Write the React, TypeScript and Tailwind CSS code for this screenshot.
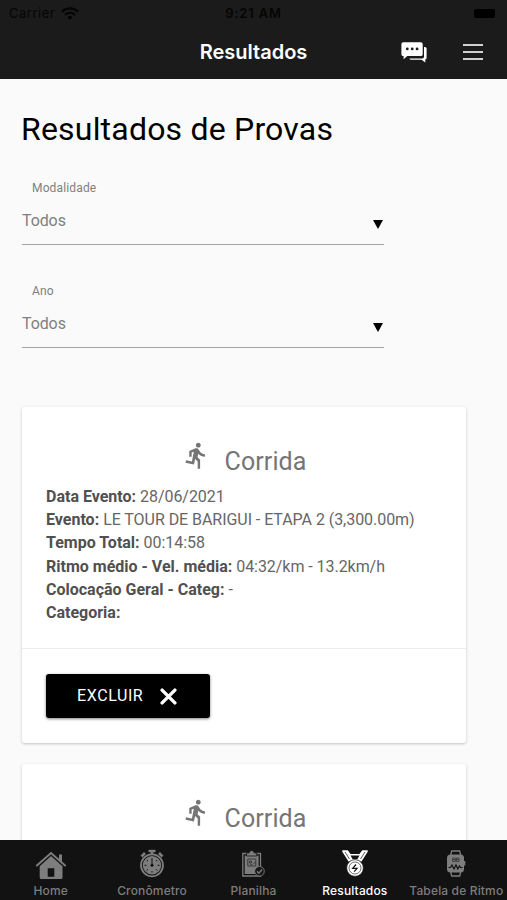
import React, { useState } from "react";
import { MdDirectionsRun } from "react-icons/md";

type Detail = { label: string; value: string };

const filters = ["Modalidade", "Ano"];

const results: { sport: string; details: Detail[] }[] = [
  {
    sport: "Corrida",
    details: [
      { label: "Data Evento:", value: "28/06/2021" },
      { label: "Evento:", value: "LE TOUR DE BARIGUI - ETAPA 2 (3,300.00m)" },
      { label: "Tempo Total:", value: "00:14:58" },
      { label: "Ritmo médio - Vel. média:", value: "04:32/km - 13.2km/h" },
      { label: "Colocação Geral - Categ:", value: "-" },
      { label: "Categoria:", value: "" },
    ],
  },
  { sport: "Corrida", details: [] },
];

const WifiIcon = () => (
  <svg width="18" height="13" viewBox="0 0 18 13" fill="none" stroke="#050505" strokeWidth="2.3">
    <path d="M1 4.6C5.5 .3 12.5 .3 17 4.6" />
    <path d="M4 7.8c2.9-2.6 7.1-2.6 10 0" />
    <path d="M6.3 9.9c1.6-1.3 3.8-1.3 5.4 0L9 12.7z" fill="#050505" stroke="none" />
  </svg>
);

const ChatIcon = () => (
  <svg width="26" height="21" viewBox="0 0 26 21">
    <path d="M23 5h1q1.6 0 1.6 1.6v9.2q0 1.6-1.3 1.8V20.6L20.5 17.8H10.2q-1.6 0-1.8-1.4H21.4q1.6 0 1.6-1.6z" fill="#fff" />
    <path d="M2.2 .3H19.8q1.9 0 1.9 1.9V12.2q0 1.9-1.9 1.9H6.3L2.6 17.2V14.1H2.2Q.4 14.1 .4 12.2V2.2Q.4 .3 2.2 .3z" fill="#fff" />
    <circle cx="6.3" cy="6.9" r="1.4" fill="#1b1b1b" />
    <circle cx="11.2" cy="6.9" r="1.4" fill="#1b1b1b" />
    <circle cx="16.1" cy="6.9" r="1.4" fill="#1b1b1b" />
  </svg>
);

const HomeIcon = () => (
  <svg width="32" height="30" viewBox="0 0 32 30">
    <path d="M24 5.5h3v8l-3-3z" fill="currentColor" />
    <path d="M1.9 16.5L16 4l14.1 12.500" fill="none" stroke="currentColor" strokeWidth="2" strokeLinecap="round" />
    <path fillRule="evenodd" d="M16 7L27.500 17.300V28.500q0 1.500-1.500 1.500H6.200q-1.500 0-1.500-1.500V17.300zM12.700 19.300v8.500h6.600v-8.500z" fill="currentColor" />
  </svg>
);

const StopwatchIcon = () => (
  <svg width="32" height="30" viewBox="0 0 32 30" fill="none" stroke="currentColor">
    <path d="M12.5 2h7" strokeWidth="2.4" />
    <path d="M16 2.500v3M5.500 7.500l3.500-3.500M26.500 7.500L23 4" strokeWidth="2.600" />
    <circle cx="16" cy="16.300" r="11" strokeWidth="1.800" />
    <circle cx="16" cy="16.300" r="9.200" fill="currentColor" stroke="none" />
    <g stroke="#121212" strokeWidth="1">
      <path d="M16 9V16.300M16 22v1.500M8.500 16.300h2M21.500 16.300h2M10.700 11l1.300 1.300M21.300 11L20 12.300M10.700 21.600l1.300-1.300M21.300 21.600L20 20.300" />
    </g>
    <circle cx="16" cy="16.300" r="1.500" fill="#121212" stroke="none" />
  </svg>
);

const ClipboardIcon = () => (
  <svg width="32" height="30" viewBox="0 0 32 30">
    <path d="M5.800 4.500H23.500V27H5.800z" fill="none" stroke="currentColor" strokeWidth="1.300" />
    <path d="M7.700 6.500H21.600V25H7.700z" fill="currentColor" />
    <path d="M9.500 7V4h2.500q.7-2.600 2.700-2.600t2.700 2.600h2.500v3z" fill="currentColor" stroke="#121212" strokeWidth=".8" />
    <path d="M10.800 10h8v7h-8zM12.500 12h2v2h-2zM16 15.500l2.500-3M13 15.700h2" fill="none" stroke="#333" strokeWidth=".9" />
    <circle cx="22.500" cy="22.300" r="4.800" fill="#181818" stroke="currentColor" strokeWidth=".9" />
    <path d="M20 22.300l1.800 1.900 3.300-3.700" fill="none" stroke="currentColor" strokeWidth="1.300" />
  </svg>
);

const MedalIcon = () => (
  <svg width="32" height="30" viewBox="0 0 32 30">
    <path d="M3.300 1.200h5.500L11.500 5h9L23.200 1.200h5.500v1.500L22.500 12.500h-13L3.300 2.700z" fill="currentColor" />
    <path d="M11.500 6.500h9L18.500 10h-5z" fill="#121212" />
    <path d="M6 3l4.500 7M26 3l-4.500 7" stroke="#121212" strokeWidth=".7" fill="none" />
    <circle cx="16" cy="19" r="8.400" fill="currentColor" stroke="#121212" strokeWidth=".8" />
    <circle cx="16" cy="19" r="6" fill="none" stroke="#121212" strokeWidth=".6" />
    <path d="M17 15.500l-3.300 3.900h4.400l-2.900 3.300" fill="none" stroke="#121212" strokeWidth="1.200" />
  </svg>
);

const WatchIcon = () => (
  <svg width="32" height="30" viewBox="0 0 32 30">
    <path d="M10.500 7l1.200-5h8l1.200 5M10.500 22l1.200 5h8l1.200-5" fill="none" stroke="currentColor" strokeWidth="1.300" />
    <rect x="7" y="5.500" width="17" height="18" rx="3.500" fill="currentColor" />
    <rect x="24" y="12" width="1.300" height="4.500" fill="currentColor" />
    <path d="M12.500 9h2.800v3.500h-2.800zM16.500 9H19v3.500h-2.500zM12.500 10.700H19" fill="none" stroke="#333" strokeWidth=".8" />
    <path d="M8.500 18.500h2l1.500-2.500 2 4 2-4 1.800 4 1.700-3 1 1.500h2" fill="none" stroke="#121212" strokeWidth="1.200" />
  </svg>
);

const tabs = [
  { name: "Home", icon: <HomeIcon /> },
  { name: "Cronômetro", icon: <StopwatchIcon /> },
  { name: "Planilha", icon: <ClipboardIcon /> },
  { name: "Resultados", icon: <MedalIcon /> },
  { name: "Tabela de Ritmo", icon: <WatchIcon /> },
];

const ResultCard: React.FC<{ sport: string; details: Detail[] }> = ({ sport, details }) => (
  <article className="h-[336px] w-[444px] shrink-0 rounded-[3px] bg-white shadow-[0_1px_3px_rgba(0,0,0,0.22)]">
    <div className="h-[242px] border-b border-[#ececec] px-6 pt-[33px]">
      <div className="flex h-[45px] justify-center text-[#757575]">
        <MdDirectionsRun size={29} className="mt-[1px] mr-[14px]" />
        <h2 className="mt-[5px] text-[25px] leading-[34px] tracking-[0.1px]">{sport}</h2>
      </div>
      <div className="text-base leading-[23.2px] text-[#666]">
        {details.map((item) => (
          <p key={item.label} className="whitespace-nowrap">
            <b className="text-[#505050]">{item.label}</b>{" "}
            <span className="tracking-[-0.05px]">{item.value}</span>
          </p>
        ))}
      </div>
    </div>
    {details.length > 0 && (
      <div className="px-6 pt-[25px]">
        <button className="flex h-11 w-[164px] items-center rounded-[3px] bg-black pl-[31px] text-base tracking-[0.6px] text-white shadow-[0_1px_3px_rgba(0,0,0,0.5)]">
          EXCLUIR
          <svg width="17" height="17" viewBox="0 0 16 16" className="ml-[17px]">
            <path d="M2 2l12 12M14 2L2 14" stroke="#fff" strokeWidth="3.2" strokeLinecap="round" />
          </svg>
        </button>
      </div>
    )}
  </article>
);

const App: React.FC = () => {
  // State to track the active tab
  const [activeTab, setActiveTab] = useState<string>("Resultados");

  return (
    <div className="flex h-[900px] w-[507px] flex-col overflow-hidden bg-[#fafafa] font-['Roboto',sans-serif]">
      {/* Header */}
      <header className="h-[79px] shrink-0 bg-[#1b1b1b] font-['Inter',sans-serif]">
        <div className="grid h-[27px] grid-cols-3 items-center px-[9px] text-[13px] text-[#050505]">
          <div className="flex items-center gap-[6px]">
            <span className="tracking-[0.5px]">Carrier</span>
            <WifiIcon />
          </div>
          <span className="text-center font-semibold tracking-[0.8px]">9:21 AM</span>
          <span className="mr-[3px] h-[9px] w-[21px] justify-self-end rounded-[2px] bg-black" />
        </div>
        <div className="grid h-[50px] grid-cols-[1fr_auto_1fr] items-center pr-6">
          <span />
          <h1 className="pl-6 text-[20px] font-semibold text-white">Resultados</h1>
          <div className="flex items-center justify-end gap-[36px]">
            <ChatIcon />
            <div className="flex w-5 flex-col gap-[5px]">
              <span className="h-[2px] bg-[#d0d0d0]" />
              <span className="h-[2px] bg-[#d0d0d0]" />
              <span className="h-[2px] bg-[#d0d0d0]" />
            </div>
          </div>
        </div>
      </header>

      {/* Content */}
      <main className="flex min-h-0 flex-1 flex-col overflow-hidden pl-[22px]">
        <h2 className="mt-[29px] -ml-px text-[32px] leading-[42px] tracking-[0.2px] text-black">Resultados de Provas</h2>
        <div className="mt-[29px] h-[228px] shrink-0">
          {filters.map((filter) => (
            <div key={filter} className="h-[103px] w-[362px]">
              <label className="block pl-[10px] text-[12px] leading-[18px] tracking-[0.15px] text-[#808080]">{filter}</label>
              <div className="flex h-[48px] justify-between border-b border-[#a3a3a3] pt-[11px] text-base leading-[25px] tracking-[-0.1px] text-[#808080]">
                Todos
                <svg width="10" height="9" viewBox="0 0 10 9" className="mt-[12px] mr-[1px]">
                  <path d="M0 0h10L5 9z" fill="#000" />
                </svg>
              </div>
            </div>
          ))}
        </div>
        <div className="flex flex-col gap-[21px]">
          {results.map((result, index) => (
            <ResultCard key={index} sport={result.sport} details={result.details} />
          ))}
        </div>
      </main>

      {/* Bottom tab bar */}
      <nav className="grid h-[60px] shrink-0 grid-cols-5 bg-[#121212] font-['Inter',sans-serif]">
        {tabs.map((tab) => (
          <button
            key={tab.name}
            className={`flex flex-col items-center pt-[9px] text-[12px] font-medium tracking-[0.15px] whitespace-nowrap ${
              activeTab === tab.name ? "text-white" : "text-[#7d7d7d]"
            }`}
            onClick={() => setActiveTab(tab.name)}
          >
            {tab.icon}
            <span className="mt-[4px] leading-[16px]">{tab.name}</span>
          </button>
        ))}
      </nav>
    </div>
  );
};

export default App;
